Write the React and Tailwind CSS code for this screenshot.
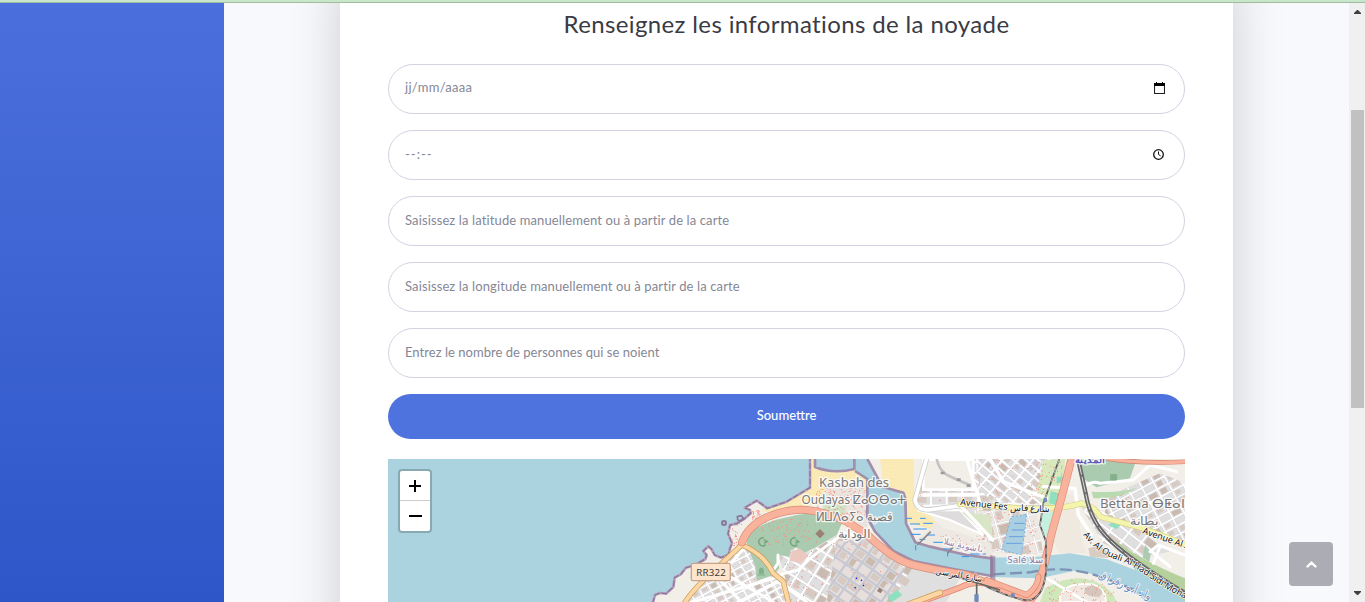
import React from "react";

function Scrollbar() {
  return (
    <div className="flex w-4 shrink-0 flex-col items-center bg-[#f0f0f0]">
      <svg className="mt-[7px] h-1 w-[7px]" viewBox="0 0 7 4"><path d="M3 0h1L7 3v1H0V3z" fill="#404040" /></svg>
      <div className="mt-24 ml-px h-[298px] w-[13px] bg-[#c1c1c1]" />
      <svg className="mt-auto mb-[7px] h-1 w-[7px]" viewBox="0 0 7 4"><path d="M0 0h7v1L4 4H3L0 1z" fill="#404040" /></svg>
    </div>
  );
}

function Field({ text, className = "", icon }) {
  return (
    <div className="flex h-[50px] items-center justify-between rounded-full border border-[#d1d3e2] bg-white pr-[19px] pl-4 text-[13px] text-[#858796]">
      <span className={"whitespace-nowrap " + className}>{text}</span>
      {icon}
    </div>
  );
}

const CalendarIcon = () => (
  <svg className="mb-0.5 h-3 w-[11px]" viewBox="0 0 11 12">
    <path d="M.5 1.5h10v10H.5z" fill="none" stroke="#222" strokeWidth="1.1" />
    <path d="M0 1h11v3H0zM2 0h1v2H2zM8 0h1v2H8z" fill="#000" />
  </svg>
);

const ClockIcon = () => (
  <svg className="mr-px mb-px h-[11px] w-[11px]" viewBox="0 0 11 11" fill="none" stroke="#111">
    <circle cx="5.5" cy="5.5" r="4.8" strokeWidth="1.3" />
    <path d="M5.5 2.5v3l2.2 1.4" strokeWidth="1" />
  </svg>
);

function rng(seed) {
  let s = seed;
  return () => {
    s = (s * 1664525 + 1013904223) % 4294967296;
    return s / 4294967296;
  };
}

function District({ id, points, angle, color = "#fff", gapX = 34, gapY = 25, width = 6, fill = "#e0dfdf", seed = 3, box, dots = 0 }) {
  const [x, y, w, h] = box;
  const cx = x + w / 2;
  const cy = y + h / 2;
  const r = Math.hypot(w, h) / 2;
  const rand = rng(seed);
  const buildings = [];
  let lines = "";
  for (let a = -r; a < r; a += gapX) {
    lines += `M${cx + a} ${cy - r}V${cy + r}`;
    for (let b = -r; b < r; b += gapY) {
      const v = rand();
      const k = rand();
      if (v > 0.25) {
        buildings.push(
          <rect key={a + "-" + b} x={cx + a + 6} y={cy + b + 5} width={(gapX - 11) * (0.5 + k / 2)} height={(gapY - 9) * (0.6 + v * 0.4)} fill={v > 0.8 ? "#c9bbb0" : "#d6cac3"} />
        );
      }
    }
  }
  for (let b = -r; b < r; b += gapY) lines += `M${cx - r} ${cy + b}H${cx + r}`;
  return (
    <g clipPath={`url(#${id})`}>
      <clipPath id={id}><polygon points={points} /></clipPath>
      <polygon points={points} fill={fill} />
      <g transform={`rotate(${angle} ${cx} ${cy})`}>
        {buildings}
        <path d={lines} stroke="#cfcbd0" strokeWidth={width + 2} fill="none" />
        <path d={lines} stroke={color} strokeWidth={width} fill="none" />
      </g>
      <Dots x={x} y={y} w={w} h={h} n={dots} seed={seed + 9} />
    </g>
  );
}

function Dots({ x, y, w, h, n, seed, color = "#f98e82" }) {
  const rand = rng(seed);
  let d = "";
  for (let i = 0; i < n; i++) d += `M${(x + rand() * w).toFixed(0)} ${(y + rand() * h).toFixed(0)}h3v3h-3z`;
  return <path d={d} fill={color} />;
}

function Road({ d, w, fill, edge }) {
  return (
    <g fill="none" strokeLinecap="round" strokeLinejoin="round">
      <path d={d} stroke={edge} strokeWidth={w + 4} />
      <path d={d} stroke={fill} strokeWidth={w} />
    </g>
  );
}

const COAST = "M38 445L45 420L60 414L78 416L100 396L104 368L122 358L138 338L165 330L196 312L200 300L190 288L205 274L215 283L224 300L244 308L265 298L270 280L276 265L264 236L270 210L290 206L315 190L332 175L330 165L314 158L325 152L350 137L362 145L382 160L440 140L510 98L510 12";
const RIVER = "M645 10L682 10L727 95L790 113L800 150L798 205L826 262L870 275L920 287L980 300L1060 308L1190 305L1290 295L1400 313L1500 350L1570 396L1640 441L1520 441L1470 400L1390 362L1300 348L1200 370L1060 366L940 342L820 318L760 288L705 230L682 188L685 130L682 72L645 48Z";

const CARTO = "font-['Noto_Sans',sans-serif]";
const halo = { stroke: "#fff", strokeWidth: 8, paintOrder: "stroke", strokeLinejoin: "round", strokeOpacity: 0.8 };

function MapView() {
  return (
    <svg className="block h-full w-full" viewBox="-756 12 2391 429" preserveAspectRatio="none">
      <defs>
        <pattern id="sand" width="11" height="11" patternUnits="userSpaceOnUse">
          <rect width="11" height="11" fill="#fbecb9" />
          <path d="M2 2h2v2H2zM7 7h2v2H7z" fill="#edcf87" />
        </pattern>
        <path id="ouali" d="M1328 240C1370 290 1400 305 1450 322S1560 400 1640 432" />
      </defs>
      <rect x="-756" y="12" width="2391" height="429" fill="#aad3df" />
      <path d={COAST + "H1640V445Z"} fill="#f2efe9" />

      <path d="M510 12H525V40Q580 60 648 45L684 68V125L600 150L510 150L400 178L362 165L440 142L512 100Z" fill="url(#sand)" />
      <path d="M560 80L660 75L684 130L680 245L600 195L545 165Z" fill="#ebe3dd" />
      <path d="M545 140L620 150L608 200L560 185Z" fill="#cfe3c4" />
      <path d="M720 10H820L822 120L890 205L880 225L800 202L796 115L730 90Z" fill="url(#sand)" />

      <District id="d1" box={[140, 270, 480, 180]} points="140,441 180,375 320,272 345,285 355,375 405,350 440,441" angle={-28} gapX={29} gapY={22} width={5} dots={15} />
      <District id="d2" box={[400, 230, 350, 215]} points="435,365 415,300 470,270 510,290 600,235 680,245 760,315 850,345 960,370 920,441 450,441" angle={32} gapX={43} gapY={36} width={6} dots={170} seed={17} />
      <District id="d2b" box={[590, 240, 180, 201]} points="590,260 680,240 760,315 795,340 740,441 560,441" angle={35} color="#c6c8d4" gapX={38} gapY={32} width={5} dots={30} seed={18} fill="#e6dfdb" />
      <District id="d3" box={[820, 12, 340, 250]} points="850,12 1260,12 1200,160 1070,255 900,170 830,160" angle={-1} gapX={47} gapY={32} width={7} seed={14} dots={130} />
      <District id="d4" box={[1000, 10, 220, 160]} points="1020,12 1240,12 1205,150 1060,140 1000,90" angle={40} gapX={35} gapY={24} width={6} seed={45} dots={55} />
      <District id="d5" box={[1340, 70, 300, 200]} points="1410,120 1560,55 1640,85 1640,275 1500,225 1390,185" angle={-28} gapX={38} gapY={25} width={5} seed={21} dots={12} />
      <District id="d6" box={[1330, 175, 200, 120]} points="1320,150 1390,170 1510,230 1590,290 1500,310 1390,265" angle={38} gapX={48} gapY={31} width={6} seed={28} />
      <District id="d7" box={[1000, 170, 190, 140]} points="1000,165 1190,170 1210,300 1040,290 1015,240" angle={-15} gapX={50} gapY={40} width={4} seed={24} dots={110} fill="#eee8e2" />
      <path d="M850 14H1000V104H850Z" fill="#f2efe9" stroke="#fff" strokeWidth="8" />
      <path d="M890 12C900 55 915 60 990 90" fill="none" stroke="#c4c4c4" strokeWidth="8" />
      <path d="M902 50h12v8h-12zM950 70h12v8h-12zM980 88h12v8h-12z" fill="#9b9b98" />
      <path d="M832 165H960L1030 240L930 195Z" fill="#dedcdc" stroke="#fff" strokeWidth="7" />
      <path d="M965 172L1050 180L1060 255Z" fill="#d8e5c6" />
      <path d="M826 262L890 200L905 215L1055 265L1055 305L940 290Z" fill="#eee8e3" />
      <Dots x={900} y={235} w={150} h={50} n={24} seed={33} />

      <path d="M320 240C345 215 405 190 450 185C520 165 580 185 608 200L590 240L525 278L490 295L470 278L452 285L448 305L412 300L418 340L402 360L350 377L345 330L320 270Z" fill="#aacbaf" />
      <path d="M455 290l22-10 28 20-22 25-35-8z" fill="#ecc9c0" />
      <Dots x={345} y={190} w={190} h={78} n={90} seed={90} />
      <Dots x={525} y={95} w={150} h={90} n={140} seed={51} />
      <Dots x={274} y={200} w={38} h={70} n={25} seed={37} />
      <Dots x={335} y={165} w={25} h={28} n={35} seed={38} />
      <path d="M1310 12H1490L1470 70L1370 97L1320 65Z" fill="#aacbaf" />
      <path d="M1355 110Q1440 115 1490 98Q1450 130 1360 130Z" fill="#b9dab0" />
      <path d="M1425 255Q1500 315 1635 370V441L1490 350Z" fill="#b5d19e" />
      <path d="M1515 270l18 20-5 30-20-12z" fill="#aacbaf" />
      <path d="M1240 105L1310 125L1325 250L1340 295L1260 295L1235 250Z" fill="#f0e9e0" />
      <path d="M1345 280L1380 270L1420 310L1350 305Z" fill="#d9ccc3" />
      <path d="M1210 15L1275 12L1270 115L1220 170L1190 110Z" fill="#d7e9bd" />
      <path d="M1250 65h20v18h-20zM1232 108l25 8-8 35-22-7zM1405 210l20-14 20 12-16 15z" fill="#8fdfc1" />
      <path d="M1205 175L1240 170L1225 240L1208 245Z" fill="#c5f0df" />
      <path d="M1215 400Q1300 350 1370 382Q1420 405 1430 441H1200Z" fill="#cfe7ba" />
      <path d="M1260 425Q1275 380 1360 388Q1400 405 1397 441H1260Z" fill="#efe9e2" stroke="#fff" strokeWidth="5" />
      <ellipse cx="1360" cy="409" rx="27" ry="16" fill="#d5c7bd" transform="rotate(10 1360 409)" />
      <path d="M1220 370L1340 441" stroke="#fff" strokeWidth="8" />
      <Dots x={1185} y={20} w={80} h={110} n={55} seed={67} />
      <Dots x={1220} y={370} w={210} h={70} n={75} seed={68} />
      <path d="M742 425l30-20 15 15-32 22z" fill="#8fdfc1" />

      <path d={RIVER} fill="#aad3df" />
      <path d="M525 10H645V45Q570 55 525 37Z" fill="#aad3df" />
      <path d="M1115 185L1160 178L1145 300L1085 285Z" fill="#a9cfe0" stroke="#7fb5e3" strokeWidth="3" strokeDasharray="7 5" />
      <path d="M1122 205h32M1115 225h37M1107 245h42M1098 265h47" stroke="#699ee0" strokeWidth="3" />
      <g fill="none" stroke="#8d7799" strokeLinejoin="round">
        <path d={COAST} strokeWidth="8" stroke="#b69fbd" />
        <path d={COAST} strokeWidth="4" strokeDasharray="18 5" />
        <path d="M525 12V36Q580 58 643 42V12M645 48L682 72V135L682 188L705 230L760 288L820 318L940 342L1055 363V310L980 300L870 275L826 262L798 205L796 130L790 113L727 95L682 12" strokeWidth="8" stroke="#a28eab" />
        <path d="M1060 358L1170 352Q1270 330 1370 362T1520 425" strokeWidth="7" strokeDasharray="36 14" stroke="#7f93b5" />
        <circle cx="252" cy="204" r="6" strokeWidth="6" />
        <path d="M292 185l12-3 6 8-10 8-7-4z" strokeWidth="5" />
      </g>
      <path d="M1050 300l16 4v75l-16-4z" fill="#8d7799" opacity=".65" />
      <path d="M800 190h16M840 190h17M810 207h30M850 205h28M820 222h40M812 238h30M860 240h25M838 253h18M880 262h30M910 282h26M950 280h36M990 297h48M965 305h22M827 270v16M923 290v14" stroke="#3292ee" strokeWidth="3" />
      <path d="M832 270L872 230M923 295L940 275" stroke="#888" strokeWidth="5" />
      <path d="M648 368l3 3m12 3l3 3m-22 20l3 3m22-10l3 3" stroke="#2020dd" strokeWidth="4" />

      <g fill="none" stroke="#fff" strokeLinecap="round" strokeLinejoin="round">
        <path d="M180 375L240 360L320 272M235 370L305 441M210 330L400 441M160 441L400 370L430 356L475 345L510 310L610 235L680 245M300 441L415 380L500 441M414 300V325L400 345" strokeWidth="9" />
        <path d="M860 10L825 135Q830 165 865 165L960 152" strokeWidth="16" stroke="#cfcfcf" />
        <path d="M860 10L825 135Q830 165 865 165L960 152" strokeWidth="11" />
        <path d="M850 120H1010M980 12L1025 160M960 150L1058 255M1050 12L1090 80L1220 130M1210 95L1305 100L1315 180L1355 240" strokeWidth="10" />
        <path d="M1330 95Q1360 75 1380 85L1480 75L1530 30L1610 50M1530 290L1555 270L1635 300M1535 290L1590 335M1560 275L1540 325" strokeWidth="9" />
        <path d="M690 242Q705 280 770 306" strokeWidth="7" />
      </g>

      <Road d="M130 450Q155 405 240 330L305 270Q370 295 400 355L430 380L446 445" w={12} fill="#fcd6a4" edge="#c99a4e" />
      <Road d="M960 147L1150 160Q1260 165 1325 145Q1365 155 1380 185L1510 220L1640 270" w={14} fill="#f4f5ad" edge="#d7ce87" />
      <Road d="M306 262Q325 210 385 185T500 165T620 200L685 242Q760 315 820 330T980 360L1170 435Q1195 415 1205 360L1225 280Q1230 250 1250 180T1295 10" w={20} fill="#f9b29c" edge="#d98d78" />
      <Road d="M1040 375L1160 420Q1195 395 1195 365M830 445L960 398Q1000 375 1070 390" w={14} fill="#f9b29c" edge="#d9856b" />
      <Road d="M800 450L900 413" w={14} fill="#fcd6a4" edge="#c99a4e" />
      <Road d="M1400 10Q1490 27 1640 20" w={10} fill="#f9b29c" edge="#cf846d" />

      <g fill="none">
        <path d="M1258 12L1210 145L1200 210L1218 260V350Q1210 435 1160 436Q1110 428 1040 395" stroke="#555" strokeWidth="5" />
        <path d="M1258 12L1210 145L1200 210L1218 260V350Q1210 435 1160 436Q1110 428 1040 395" stroke="#eee" strokeWidth="2" strokeDasharray="18 10" />
        <path d="M1314 12L1338 120Q1350 190 1395 240T1540 355T1640 415" stroke="#686868" strokeWidth="13" />
        <path d="M1314 12L1338 120Q1350 190 1395 240T1540 355T1640 415" stroke="#ddd" strokeWidth="3" strokeDasharray="48 6" />
        <path d="M940 362L1080 405M1010 385V441" stroke="#666" strokeWidth="5" />
      </g>
      <path d="M1210 130h11v11h-11zM1113 415h11v11h-11zM1003 418h13v22h-13z" fill="#7389bd" />
      <path d="M540 222l14 14-14 14-14-14zM718 398l10 7-6 10-11-7z" fill="#9b7f75" />
      <g fill="none" stroke="#78a881" strokeWidth="5">
        <path d="M372 249a12 12 0 1 0 5 20M467 249a12 12 0 1 0 5 20" />
        <path d="M372 255l9 5-9 5M467 255l9 5-9 5" />
      </g>
      <path d="M352 360h24M364 356v-16M358 356v-13q6-8 12 0v13zM1412 75h18v-16h-18z" fill="#83b08b" stroke="#83b08b" strokeWidth="3" />

      <rect x="154" y="325" width="117" height="52" rx="5" fill="#fce4cd" stroke="#c8a588" strokeWidth="4" />
      <g className={CARTO} textAnchor="middle">
        <text x="213" y="363" fontSize="29" fill="#403a34" textLength="88">RR322</text>
        <g fontSize="39" fill="#777" {...halo}>
          <text x="642" y="96" textLength="210">Kasbah des</text>
          <text x="642" y="147" textLength="315" lengthAdjust="spacingAndGlyphs">Oudayas ⵇⴰⵙⴱⴰⵜ</text>
          <text x="642" y="198" fontSize="36" textLength="230" lengthAdjust="spacingAndGlyphs">ⵍⵡⴷⴰⵢⴰ قصبة</text>
          <text x="642" y="248" fontSize="36" textLength="98" lengthAdjust="spacingAndGlyphs">الوداية</text>
          <text x="1507" y="159" textLength="254" lengthAdjust="spacingAndGlyphs">Bettana ⴱⵟⴰⵏ</text>
          <text x="1513" y="210" fontSize="36" textLength="84" lengthAdjust="spacingAndGlyphs">بطانة</text>
        </g>
        <g fontSize="27" {...halo}>
          <text x="1350" y="23" fill="#5857b7" fontWeight="bold" textLength="92" lengthAdjust="spacingAndGlyphs">المدينة</text>
          <text x="970" y="280" fill="#9681ac" textLength="122" lengthAdjust="spacingAndGlyphs" transform="rotate(12 970 270)">باشوية سلا</text>
          <text x="1156" y="324" fill="#8d78a6" textLength="108" lengthAdjust="spacingAndGlyphs">Salé سلا</text>
        </g>
      </g>
      <g className={CARTO} fontSize="27" fill="#111" stroke="#fff" strokeWidth="4" paintOrder="stroke" strokeLinejoin="round">
        <text x="960" y="150" textLength="143" transform="rotate(6 960 150)">Avenue Fes</text>
        <text x="1110" y="168" textLength="120" lengthAdjust="spacingAndGlyphs" transform="rotate(1 1110 168)">شارع فاس</text>
        <text><textPath href="#ouali">Av. Al Ouali Al Had Sidi Mohammed</textPath></text>
        <text x="1506" y="235" transform="rotate(19 1506 235)">Avenue Al Arz</text>
        <text x="884" y="358" textLength="145" lengthAdjust="spacingAndGlyphs" transform="rotate(9 884 358)">شارع المرسى</text>
        <text x="1374" y="367" fontSize="32" fill="#698fc1" textLength="170" lengthAdjust="spacingAndGlyphs" transform="rotate(24 1374 367)">واد أبو رقراق</text>
      </g>
    </svg>
  );
}

function ZoomControl() {
  return (
    <div className="absolute top-2.5 left-2.5 w-[34px] overflow-hidden rounded-[4px] border-2 border-[#88a9b2] bg-white">
      <button className="flex h-[30px] w-full items-center justify-center border-b border-[#ccc]" aria-label="Zoom +">
        <svg className="mr-px h-3 w-3" viewBox="0 0 12 12"><path d="M0 5h12v2H0zM5 0h2v12H5z" /></svg>
      </button>
      <button className="flex h-[30px] w-full items-center justify-center" aria-label="Zoom −">
        <svg className="ml-px h-0.5 w-[13px]" viewBox="0 0 13 2"><path d="M0 0h13v2H0z" /></svg>
      </button>
    </div>
  );
}

export default function App() {
  return (
    <div className="flex h-[602px] w-full flex-col overflow-hidden bg-[#f8f9fc] font-['Lato',sans-serif]">
      <div className="h-[3px] shrink-0 border-b border-[#9dbd9e] bg-[#c8e6c9]" />
      <div className="flex min-h-0 flex-1">
        <aside className="w-56 shrink-0 bg-linear-to-b from-[#4b70dd] to-[#2f56c8]" />
        <main className="relative flex min-w-0 flex-1 justify-center overflow-hidden">
          <div className="-mt-10 -mb-20 h-[719px] w-[893px] bg-white px-12 pt-10 shadow-[0_16px_48px_rgba(0,0,0,0.175)]">
            <h1 className="flex h-[61px] items-start justify-center pt-[5px] text-2xl leading-8 text-[#3a3b45]">
              <span className="whitespace-nowrap tracking-[0.37px]">Renseignez les informations de la noyade</span>
            </h1>
            <div className="flex flex-col gap-4">
              <Field text="jj/mm/aaaa" className="mb-0.5 tracking-[0.3px]" icon={<CalendarIcon />} />
              <Field text="--:--" className="mb-px tracking-[1px]" icon={<ClockIcon />} />
              <Field text="Saisissez la latitude manuellement ou à partir de la carte" className="tracking-[0.12px]" />
              <Field text="Saisissez la longitude manuellement ou à partir de la carte" className="tracking-[0.12px]" />
              <Field text="Entrez le nombre de personnes qui se noient" className="tracking-[0.03px]" />
              <button className="h-[45px] rounded-full bg-[#4e73df] pb-px text-[13px] font-medium text-white">Soumettre</button>
            </div>
            <div className="relative mt-5 h-[143px] overflow-hidden">
              <MapView />
              <ZoomControl />
            </div>
          </div>
          <button className="absolute right-4 bottom-4 flex h-11 w-11 items-center justify-center rounded bg-[#acacb5]" aria-label="Haut">
            <svg className="h-[7px] w-[11px]" viewBox="0 0 11 7"><path d="M1.5 5.5L5.5 1.7L9.5 5.5" fill="none" stroke="#fff" strokeWidth="2.4" strokeLinecap="round" /></svg>
          </button>
        </main>
        <Scrollbar />
      </div>
    </div>
  );
}
